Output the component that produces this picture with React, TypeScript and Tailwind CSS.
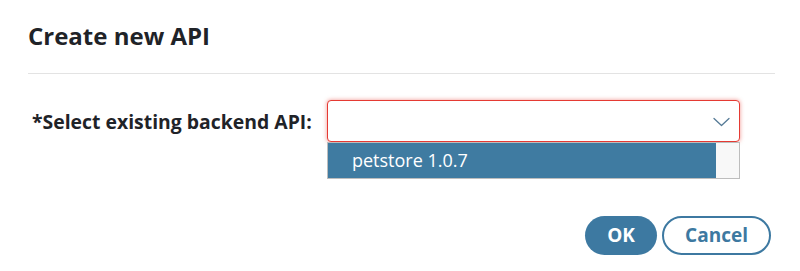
export default function App() {
  return (
    <div className="w-[800px] h-[271px] bg-white font-['Open_Sans',sans-serif] text-[#1f2328]">
      <div className="pl-[28px] pr-[25px] pt-[20px]">
        <h1 className="text-[24px] leading-[32px] font-bold">Create new API</h1>
        <div className="mt-[21px] h-px bg-[#e3e3e3]" />
      </div>

      <div className="flex items-start pt-[26px]">
        <label className="w-[327px] pl-[32px] pt-[10px] text-[19.4px] leading-[24px] font-bold">
          *Select existing backend API:
        </label>
        <div className="w-[413px] flex flex-col">
          <div className="h-[42px] flex items-center justify-end pr-[9px] rounded-[4px] border-[1.5px] border-[#e53a33] shadow-[0_0_4px_rgba(229,58,51,0.55)] bg-white">
            <svg width="17" height="10" viewBox="0 0 17 10" fill="none" className="mt-[2px]">
              <path d="M1 1.5 L8.5 8.5 L16 1.5" stroke="#557a96" strokeWidth="1.3" strokeLinecap="round" strokeLinejoin="round" />
            </svg>
          </div>
          <div className="flex h-[37px] border border-[#bdbdbd] bg-white">
            <div className="flex-1 flex items-center pl-[24px] bg-[#3f7ba1] text-white text-[18px]">
              petstore 1.0.7
            </div>
            <div className="w-[23px] bg-[#f8f8f8]" />
          </div>
        </div>
      </div>

      <div className="flex justify-end gap-[5px] pr-[29px] pt-[37px]">
        <button className="h-[39px] w-[72px] rounded-full bg-[#3d79a1] text-white text-[19px] font-bold">
          OK
        </button>
        <button className="h-[39px] w-[109px] rounded-full border-2 border-[#3d79a1] bg-white text-[#3d79a1] text-[19px] font-bold">
          Cancel
        </button>
      </div>
    </div>
  );
}
